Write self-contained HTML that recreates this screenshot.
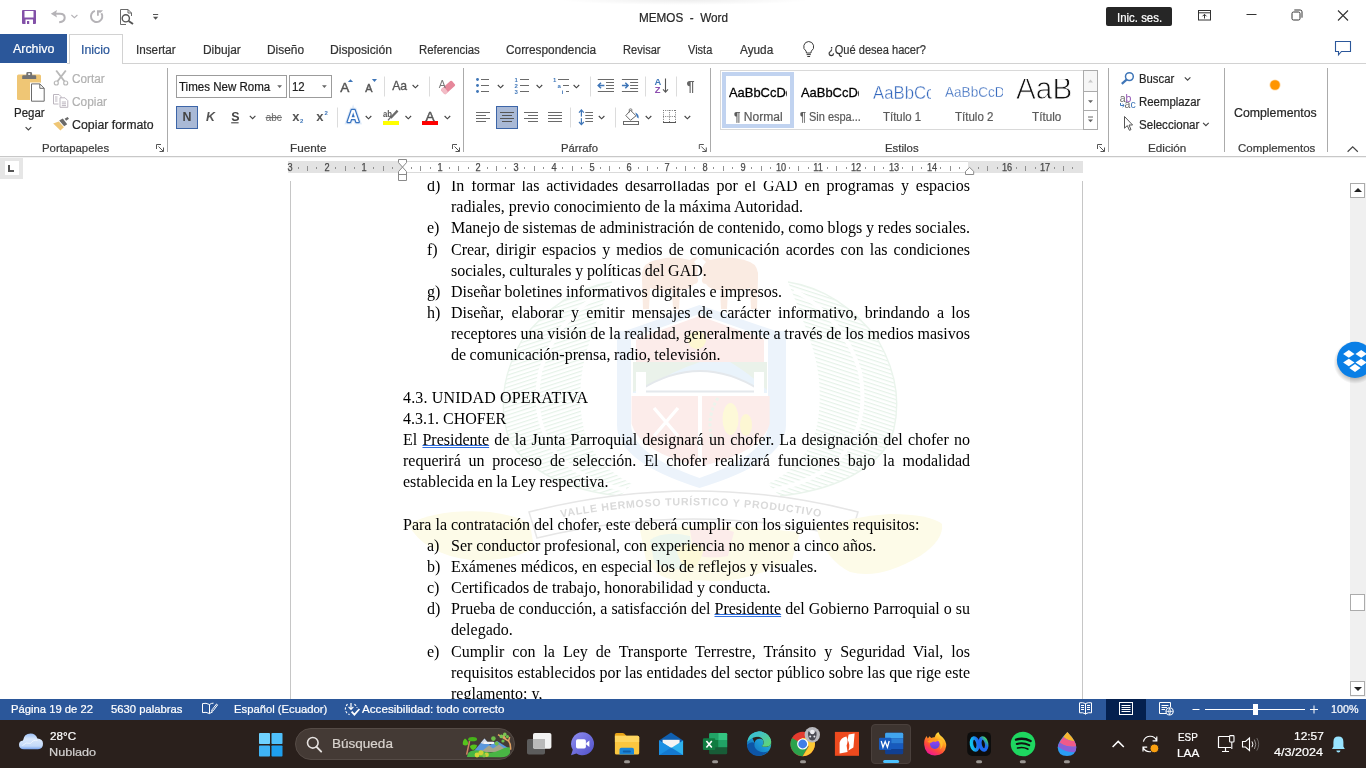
<!DOCTYPE html>
<html lang="es">
<head>
<meta charset="utf-8">
<title>MEMOS - Word</title>
<style>
*{box-sizing:border-box;margin:0;padding:0}
html,body{width:1366px;height:768px;overflow:hidden;background:#fff}
body{will-change:transform;font-family:"Liberation Sans",sans-serif;font-size:12px;color:#262626;position:relative}
svg{font-family:"Liberation Sans",sans-serif}
.abs{position:absolute}
.t{-webkit-text-stroke:.22px;position:absolute;white-space:nowrap;transform-origin:0 50%;line-height:16px;height:16px}
#top{position:absolute;left:0;top:0;width:1366px;height:158px;background:#fff}
#archivo{position:absolute;left:0;top:34px;width:67px;height:29px;background:#2b579a}
#inicio{position:absolute;left:69px;top:34px;width:54px;height:30px;background:#fff;border:1px solid #d2d2d2;border-bottom:none}
#tabline{position:absolute;left:67px;top:63px;width:1299px;height:1px;background:#d2d2d2}
#ribline{position:absolute;left:0;top:156px;width:1366px;height:2px;background:linear-gradient(#c8c8c8 0 50%,#f2f2f2 50% 100%)}
#signin{position:absolute;left:1106px;top:7px;width:66px;height:19px;background:#262626;border-radius:2px}
.box{position:absolute;background:#fff;border:1px solid #9c9c9c}
#ruler{z-index:1;position:absolute;left:0;top:158px;width:1366px;height:22px;background:#fff}
#doc{position:absolute;left:0;top:181px;width:1366px;height:518px;background:#fff;overflow:hidden}
#status{position:absolute;left:0;top:699px;width:1366px;height:21px;background:#2b579a;color:#fff}
#taskbar{position:absolute;left:0;top:720px;width:1366px;height:48px;background:#2a201c;color:#fff}
.pgl{position:absolute;top:0px;width:1px;height:520px;background:#c6c6c6}
#txt{position:absolute;left:403px;top:-5.9px;width:567px;font-family:"Liberation Serif",serif;font-size:16px;line-height:21.17px;color:#000}
.ln{height:21.17px;white-space:nowrap;position:relative}
.ln.li{padding-left:48px}
.ln.j{text-align:justify;text-align-last:justify;white-space:normal}
.lb{position:absolute;left:24px;top:0}
.gr{text-decoration:underline double #2f6fe0;text-decoration-thickness:1px;text-underline-offset:0px;text-decoration-skip-ink:none}
#vsb{position:absolute;left:1350px;top:2px;width:16px;height:514px;background:#f0f0f0}
.sbb{position:absolute;left:0;width:15px;height:15px;background:#fff;border:1px solid #ababab}
.sbb i{position:absolute;left:3px;width:0;height:0;border-left:4px solid transparent;border-right:4px solid transparent}
.sbb i.up{top:4px;border-bottom:4px solid #222}
.sbb i.dn{top:5px;border-top:4px solid #222}
.thumb{position:absolute;left:0px;top:411px;width:15px;height:17px;background:#fff;border:1px solid #ababab}
.rn{position:absolute;top:3.7px;width:20px;margin-left:-10px;text-align:center;font-size:10px;line-height:11px;color:#4a4a4a;-webkit-text-stroke:.25px;transform:scaleX(.92)}
.gal{position:absolute;overflow:hidden;white-space:nowrap}
.gal span{position:absolute;left:0;transform-origin:0 50%;line-height:1}
#tshadow{position:absolute;left:560px;top:0;width:250px;height:5px;background:radial-gradient(ellipse 50% 100% at 50% 0,rgba(0,0,0,.07),rgba(0,0,0,0))}

</style>
</head>
<body>
<div id="top">
<div id="tshadow"></div><div id="tabline"></div><div id="archivo"></div><div id="inicio"></div>
<div id="signin"></div>
<div class="box" style="left:176px;top:75px;width:111px;height:23px"></div>
<div class="box" style="left:289px;top:75px;width:43px;height:23px"></div>
<div class="abs" style="left:720px;top:70px;width:364px;height:60px;border:1px solid #d9d9d9;background:#fff"></div>
<div class="abs" style="left:722px;top:72px;width:72px;height:56px;border:4px solid #c1d3f0;background:#fff"></div>
<div class="gal" style="left:728.5px;top:82px;width:58.8px;height:20px"><span style="top:3.6px;font-size:13.2px;color:#000;-webkit-text-stroke:.3px;transform:scaleX(.98)">AaBbCcDd</span></div>
<div class="gal" style="left:800.6px;top:82px;width:58.6px;height:20px"><span style="top:3.6px;font-size:13.2px;color:#000;-webkit-text-stroke:.3px;transform:scaleX(.98)">AaBbCcDd</span></div>
<div class="gal" style="left:873px;top:78px;width:58px;height:26px"><span style="top:6.2px;font-size:18px;color:#3468bd;-webkit-text-stroke:.4px #fff;transform:scaleX(.93)">AaBbCcD</span></div>
<div class="gal" style="left:945px;top:80px;width:58px;height:22px"><span style="top:4.8px;font-size:14.6px;color:#3468bd;-webkit-text-stroke:.3px #fff;transform:scaleX(.93)">AaBbCcDd</span></div>
<div class="gal" style="left:1014px;top:79px;width:62px;height:26px"><span style="left:2px;top:-6.8px;font-size:32px;color:#111;-webkit-text-stroke:.9px #fff;transform:scaleX(.93)">AaB</span></div>

<div id="ribline"></div>
<svg class="abs" style="left:0;top:0" width="1366" height="158" viewBox="0 0 1366 158" fill="none">
<!-- quick access -->
<rect x="22" y="10" width="14" height="14" rx="1" fill="#8351a8"/>
<rect x="24.5" y="11" width="9" height="6.5" fill="#fff"/>
<rect x="25.5" y="19.5" width="7.5" height="4.5" fill="#fff"/>
<rect x="27" y="21" width="2.2" height="3" fill="#8351a8"/>
<path d="M50.8 13.8 L57 10 L55.9 13.8 L57 17.6 Z" fill="#b5b3b7"/>
<path d="M55 13.8 H60 Q64.7 13.8 64.7 17.8 Q64.7 21.7 59.2 22.3" stroke="#b5b3b7" stroke-width="2"/>
<path d="M71.4 15 L74.4 17.7 L77.4 15" stroke="#b5b3b7" stroke-width="1.1"/>
<path d="M94.9 10.9 A5.7 5.7 0 1 0 101.4 13.2" stroke="#b5b3b7" stroke-width="2"/>
<path d="M97 10.2 H103 L100.6 12.8 L98.8 12.4 V15.8 H97 Z" fill="#b5b3b7"/>
<path d="M120.5 9.5 H128 L131.5 13 V16 M120.5 9.5 V24.5 H126 M128 9.5 V13 H131.5" stroke="#6a6a6a" stroke-width="1"/>
<circle cx="125.8" cy="18.3" r="3.6" stroke="#555" stroke-width="1.4" fill="#fff"/>
<path d="M128.6 21 L133 24" stroke="#555" stroke-width="2"/>
<path d="M153 14.5 H158.2" stroke="#555" stroke-width="1"/>
<path d="M153 16.8 H158.2 L155.6 19.8 Z" fill="#555"/>
<!-- window buttons -->
<rect x="1198.5" y="10.5" width="12" height="9.5" stroke="#333" stroke-width="1"/>
<path d="M1198.5 12.8 H1210.5 M1204.5 18.5 V14.5 M1202.5 16.3 L1204.5 14.3 L1206.5 16.3" stroke="#333" stroke-width="1"/>
<path d="M1246.5 14.5 H1256.5" stroke="#333" stroke-width="1"/>
<rect x="1292" y="12" width="8" height="8" rx="1.5" stroke="#333" stroke-width="1"/>
<path d="M1294.3 10 H1300.2 Q1302 10 1302 11.8 V17.7" stroke="#333" stroke-width="1"/>
<path d="M1338 10.5 L1348 20.5 M1348 10.5 L1338 20.5" stroke="#333" stroke-width="1.1"/>
<!-- tab row icons -->
<path d="M808.7 41.5 A5.2 5.2 0 0 0 806 51 Q806.4 51.8 806.4 53 H811 Q811 51.8 811.4 51 A5.2 5.2 0 0 0 808.7 41.5 Z" stroke="#3b3b3b" stroke-width="1"/>
<path d="M806.6 54.6 H810.8 M807.3 56.5 H810.1" stroke="#3b3b3b" stroke-width="1"/>
<path d="M1335.5 41.5 H1350.5 V51.5 H1341.5 L1338.5 54.8 V51.5 H1335.5 Z" stroke="#2b579a" stroke-width="1.1"/>
<path d="M25.6 127.2 l2.8 2.8 l2.8 -2.8" stroke="#444" stroke-width="1.15"/>
<path d="M249.8 115.9 l2.8 2.8 l2.8 -2.8" stroke="#444" stroke-width="1.15"/>
<path d="M412.6 85 l2.8 2.8 l2.8 -2.8" stroke="#444" stroke-width="1.15"/>
<path d="M365.7 116 l2.8 2.8 l2.8 -2.8" stroke="#444" stroke-width="1.15"/>
<path d="M405.5 116 l2.8 2.8 l2.8 -2.8" stroke="#444" stroke-width="1.15"/>
<path d="M444.6 116 l2.8 2.8 l2.8 -2.8" stroke="#444" stroke-width="1.15"/>
<path d="M497.8 85 l2.8 2.8 l2.8 -2.8" stroke="#444" stroke-width="1.15"/>
<path d="M536.6 85 l2.8 2.8 l2.8 -2.8" stroke="#444" stroke-width="1.15"/>
<path d="M573.6 85 l2.8 2.8 l2.8 -2.8" stroke="#444" stroke-width="1.15"/>
<path d="M598.8 116 l2.8 2.8 l2.8 -2.8" stroke="#444" stroke-width="1.15"/>
<path d="M645.7 116 l2.8 2.8 l2.8 -2.8" stroke="#444" stroke-width="1.15"/>
<path d="M684.6 116 l2.8 2.8 l2.8 -2.8" stroke="#444" stroke-width="1.15"/>
<path d="M1184.8 77.3 l2.8 2.8 l2.8 -2.8" stroke="#444" stroke-width="1.15"/>
<path d="M1203.1 122.9 l2.8 2.8 l2.8 -2.8" stroke="#444" stroke-width="1.15"/>
<path d="M156.5 149 V144.5 H161 M158.5 146.5 L163.3 151.3 M163.5 147.5 V151.5 H159.5" stroke="#555" stroke-width="1"/>
<path d="M452.5 149 V144.5 H457 M454.5 146.5 L459.3 151.3 M459.5 147.5 V151.5 H455.5" stroke="#555" stroke-width="1"/>
<path d="M699.3 149 V144.5 H703.8 M701.3 146.5 L706.0999999999999 151.3 M706.3 147.5 V151.5 H702.3" stroke="#555" stroke-width="1"/>
<path d="M1097.5 149 V144.5 H1102 M1099.5 146.5 L1104.3 151.3 M1104.5 147.5 V151.5 H1100.5" stroke="#555" stroke-width="1"/>
<path d="M167.5 68 V152" stroke="#ababab" stroke-width="1"/>
<path d="M463.5 68 V152" stroke="#ababab" stroke-width="1"/>
<path d="M710.5 68 V152" stroke="#ababab" stroke-width="1"/>
<path d="M1108.5 68 V152" stroke="#ababab" stroke-width="1"/>
<path d="M1224.5 68 V152" stroke="#ababab" stroke-width="1"/>
<path d="M1327.5 68 V152" stroke="#ababab" stroke-width="1"/>
<path d="M384.5 76.5 V96.5" stroke="#dcdcdc" stroke-width="1"/>
<path d="M429.5 76.5 V96.5" stroke="#dcdcdc" stroke-width="1"/>
<path d="M590.5 76.5 V96.5" stroke="#dcdcdc" stroke-width="1"/>
<path d="M645.5 76.5 V96.5" stroke="#dcdcdc" stroke-width="1"/>
<path d="M676.5 76.5 V96.5" stroke="#dcdcdc" stroke-width="1"/>
<path d="M337.5 107.5 V127.5" stroke="#dcdcdc" stroke-width="1"/>
<path d="M570.5 107.5 V127.5" stroke="#dcdcdc" stroke-width="1"/>
<path d="M615.5 107.5 V127.5" stroke="#dcdcdc" stroke-width="1"/>
<rect x="17" y="74.5" width="24" height="25.6" rx="1.5" fill="#efc675"/>
<path d="M22.2 79 V76.3 Q22.2 75.2 23.3 75.2 H26.3 V73.4 Q26.3 72 27.7 72 H30.7 Q32.1 72 32.1 73.4 V75.2 H35.1 Q36.2 75.2 36.2 76.3 V79 Z" fill="#737373"/>
<rect x="28.2" y="73.3" width="2" height="1.6" fill="#fff"/>
<path d="M30 82.4 H40.4 L45.6 87.6 V102.6 H30 Z" fill="#fff"/>
<path d="M31.5 83.9 H39.8 L44.2 88.3 V101.2 H31.5 Z M39.8 83.9 V88.3 H44.2" stroke="#6a6a6a" stroke-width="1" fill="#fff"/>
<path d="M56.2 70.5 L64.6 81.5 M65.8 70.5 L57.4 81.5" stroke="#b9b9b9" stroke-width="1.9"/>
<circle cx="56.3" cy="83" r="2" stroke="#b9b9b9" stroke-width="1.2"/><circle cx="65.7" cy="83" r="2" stroke="#b9b9b9" stroke-width="1.2"/>
<path d="M53.5 94.5 H59 L61 96.5 V98 M53.5 94.5 V104 H58.5 M55 97 H57.5 M55 99 H57.5 M55 101 H57.5" stroke="#bcb6bf" stroke-width="1"/>
<path d="M60 97.8 H65 L67.8 100.6 V107.3 H60 Z M61.8 102 H66 M61.8 103.8 H66 M61.8 105.6 H66" stroke="#bcb6bf" stroke-width="1"/>
<path d="M53.2 123.4 L58.8 121.6 L63.9 127.2 L60.4 130.6 Z" fill="#efc675"/>
<path d="M59.2 120.6 L62.8 118.6 L67.2 124.2 L64.2 126.2 Z" fill="#6a6a6a"/>
<path d="M64.6 118.8 L67.6 116.9 L69 118.8 L66.1 120.8 Z" fill="#6a6a6a"/>
<path d="M277.2 85.2 H282 L279.6 88 Z" fill="#666"/><path d="M322 85.2 H326.8 L324.4 88 Z" fill="#666"/>
<path d="M347.9 82 H353.1 L350.5 79.2 Z" fill="#3f76b8"/><path d="M371.9 79 H377 L374.45 81.9 Z" fill="#3f76b8"/>
<g transform="rotate(-42 448 87.4)"><rect x="440.8" y="84.2" width="14.4" height="6.6" rx="1.2" fill="#e6879a"/><rect x="440.8" y="84.2" width="4.4" height="6.6" rx="1.2" fill="#f2bcc6"/></g>
<path d="M397.6 110.6 L390.6 118" stroke="#6a6a6a" stroke-width="2.3"/><path d="M390.8 117 L388 120.4" stroke="#6a6a6a" stroke-width="1.2"/>
<rect x="383" y="121" width="16" height="4" fill="#ffff00"/>
<rect x="422" y="121" width="16" height="4" fill="#ff0000"/>
<circle cx="477.5" cy="79.5" r="1.45" fill="#3f76b8"/><path d="M481 79.5 H489" stroke="#6a6a6a"/>
<path d="M520 79.5 H529" stroke="#6a6a6a"/>
<circle cx="477.5" cy="85.5" r="1.45" fill="#3f76b8"/><path d="M481 85.5 H489" stroke="#6a6a6a"/>
<path d="M520 85.5 H529" stroke="#6a6a6a"/>
<circle cx="477.5" cy="91.5" r="1.45" fill="#3f76b8"/><path d="M481 91.5 H489" stroke="#6a6a6a"/>
<path d="M520 91.5 H529" stroke="#6a6a6a"/>
<path d="M558 79.5 H569 M563 85.5 H569 M566 91.5 H569" stroke="#6a6a6a"/>
<path d="M597.8 79.5 H614.0 M597.8 91.5 H614.0 M606.0 82.5 H614.0 M606.0 85.5 H614.0 M606.0 88.5 H614.0" stroke="#6a6a6a"/>
<path d="M598.4 85.5 H604.4 M601.0 82.8 L598.1999999999999 85.5 L601.0 88.2" stroke="#3f76b8" stroke-width="1.5"/>
<path d="M621.9 79.5 H638.1 M621.9 91.5 H638.1 M630.1 82.5 H638.1 M630.1 85.5 H638.1 M630.1 88.5 H638.1" stroke="#6a6a6a"/>
<path d="M621.9 85.5 H627.9 M625.3 82.8 L628.1 85.5 L625.3 88.2" stroke="#3f76b8" stroke-width="1.5"/>
<path d="M665.5 78.5 V92 M663 89.4 L665.5 92.2 L668 89.4" stroke="#555" stroke-width="1.1"/>
<path d="M476 112.5 H490" stroke="#6a6a6a"/>
<path d="M476 115.5 H486" stroke="#6a6a6a"/>
<path d="M476 118.5 H490" stroke="#6a6a6a"/>
<path d="M476 121.5 H486" stroke="#6a6a6a"/>
<rect x="496.5" y="106.5" width="21" height="22" fill="#a9b9d6" stroke="#3c65a8"/>
<path d="M500 112.5 H514" stroke="#555"/>
<path d="M502 115.5 H512" stroke="#555"/>
<path d="M500 118.5 H514" stroke="#555"/>
<path d="M502 121.5 H512" stroke="#555"/>
<path d="M524 112.5 H538" stroke="#6a6a6a"/>
<path d="M528 115.5 H538" stroke="#6a6a6a"/>
<path d="M524 118.5 H538" stroke="#6a6a6a"/>
<path d="M528 121.5 H538" stroke="#6a6a6a"/>
<path d="M548 112.5 H562" stroke="#6a6a6a"/>
<path d="M548 115.5 H562" stroke="#6a6a6a"/>
<path d="M548 118.5 H562" stroke="#6a6a6a"/>
<path d="M548 121.5 H562" stroke="#6a6a6a"/>
<path d="M585.3 112.5 H593.0" stroke="#6a6a6a"/>
<path d="M585.3 115.5 H593.0" stroke="#6a6a6a"/>
<path d="M585.3 118.5 H593.0" stroke="#6a6a6a"/>
<path d="M585.3 121.5 H593.0" stroke="#6a6a6a"/>
<path d="M581.4 110 V124.6 M579 112.6 L581.4 109.9 L583.8 112.6 M579 122 L581.4 124.7 L583.8 122" stroke="#3f76b8" stroke-width="1.2"/>
<rect x="579" y="116.6" width="5" height="1.6" fill="#fff"/>
<rect x="623.5" y="121.5" width="15" height="3" fill="#fff" stroke="#6a6a6a"/>
<path d="M630.5 110.3 L636 115.8 L630.5 120.3 L625.8 115.6 Z" stroke="#6a6a6a" fill="#fff"/>
<path d="M629.3 112.5 V109.6 Q629.3 108.9 630.2 108.9 H631 Q631.8 108.9 631.8 109.6 V111.4" stroke="#6a6a6a" stroke-width=".9"/>
<path d="M635.2 112.6 Q639.2 114 638.6 118.4 Q636.4 117.4 636.4 115.4 Z" fill="#3f76b8"/>
<path d="M663.5 110 V122 M669.5 110 V122 M675.5 110 V122 M663 110.5 H676 M663 116.5 H676" stroke="#777" stroke-dasharray="1 1.2"/>
<path d="M663 122.5 H676" stroke="#555"/>
<rect x="176.5" y="106.5" width="21" height="22" fill="#a9b9d6" stroke="#3c65a8"/>
<path d="M231.2 122.8 H238.6" stroke="#444" stroke-width="1.1"/>
<path d="M265.6 117.6 H282" stroke="#666" stroke-width="1"/>
<rect x="1083.5" y="70.5" width="14" height="21" fill="#f6f6f6" stroke="#ababab"/><rect x="1083.5" y="91.5" width="14" height="19" fill="#fff" stroke="#ababab"/><rect x="1083.5" y="110.5" width="14" height="19" fill="#fff" stroke="#ababab"/>
<path d="M1088 82.4 H1093 L1090.5 79.6 Z" fill="#c8c8c8"/><path d="M1088 100.2 H1093 L1090.5 103 Z" fill="#666"/><path d="M1088 117 H1093" stroke="#666"/><path d="M1088 119.4 H1093 L1090.5 122.2 Z" fill="#666"/>
<circle cx="1129.4" cy="76.6" r="3.9" stroke="#3f76b8" stroke-width="1.5"/><path d="M1126.6 79.6 L1121.8 83.8" stroke="#3f76b8" stroke-width="2.2"/>
<path d="M1120.5 103 V105.5 H1124 M1122.6 104 L1124.2 105.5 L1122.6 107" stroke="#3f76b8" stroke-width="1"/>
<path d="M1124.5 116.5 V128.2 L1127.3 125.6 L1129.4 130.3 L1131 129.6 L1129 125 H1132.6 Z" stroke="#555" stroke-width="1" fill="#fff"/>
<circle cx="1275" cy="85" r="5.6" fill="#ffb040" opacity=".45"/><circle cx="1275" cy="85" r="4.8" fill="#ff9500"/>
<path d="M1347.6 151.8 L1352.7 146.9 L1357.8 151.8" stroke="#444" stroke-width="1.2"/>
<text x="340.2" y="92" font-size="13.6" fill="#555" stroke="#555" stroke-width=".45">A</text>
<text x="365.2" y="92" font-size="10.8" fill="#555" stroke="#555" stroke-width=".45">A</text>
<text x="392.2" y="89.8" font-size="12.2" fill="#555" stroke="#555" stroke-width=".3">Aa</text>
<text x="438.8" y="87.6" font-size="10.5" fill="#777" >A</text>
<text x="347.2" y="122.4" font-size="16.5" font-weight="bold" fill="#cfe0f5" stroke="#cfe0f5" stroke-width="4.4" opacity=".7">A</text>
<text x="347.2" y="122.4" font-size="16.5" font-weight="bold" fill="#fff" stroke="#3672c0" stroke-width="2.4" paint-order="stroke" stroke-linejoin="round">A</text>
<text x="383" y="117.2" font-size="9.5" fill="#555" font-weight="bold" textLength="9" lengthAdjust="spacingAndGlyphs">ab</text>
<text x="425.6" y="120.8" font-size="13.6" fill="#555" stroke="#555" stroke-width=".45">A</text>
<text x="182.5" y="120.6" font-size="12.4" fill="#444" font-weight="bold">N</text>
<text x="206" y="120.6" font-size="12.4" fill="#555" font-weight="bold" font-style="italic">K</text>
<text x="231.2" y="120.6" font-size="12.4" fill="#444" font-weight="bold">S</text>
<text x="265.8" y="121" font-size="10.5" fill="#666" textLength="16" lengthAdjust="spacingAndGlyphs">abc</text>
<text x="292.2" y="120.6" font-size="13" fill="#555" font-weight="bold">x</text>
<text x="300" y="123.4" font-size="6" fill="#3f76b8" font-weight="bold">2</text>
<text x="316.2" y="120.6" font-size="13" fill="#555" font-weight="bold">x</text>
<text x="324.4" y="115.4" font-size="6" fill="#3f76b8" font-weight="bold">2</text>
<text x="514.6" y="81.6" font-size="6" fill="#3f76b8" font-weight="bold">1</text>
<text x="514.6" y="87.6" font-size="6" fill="#3f76b8" font-weight="bold">2</text>
<text x="514.6" y="93.6" font-size="6" fill="#3f76b8" font-weight="bold">3</text>
<text x="553" y="81.6" font-size="6" fill="#3f76b8" font-weight="bold">1</text>
<text x="557.4" y="87.6" font-size="6" fill="#3f76b8" font-weight="bold">a</text>
<text x="561.8" y="93.6" font-size="6" fill="#3f76b8" font-weight="bold">i</text>
<text x="654.6" y="85.2" font-size="9.4" fill="#3f76b8" font-weight="bold">A</text>
<text x="654.8" y="92.8" font-size="9.4" fill="#8e4fb0" font-weight="bold">Z</text>
<text x="686.4" y="91" font-size="14.5" fill="#666" font-weight="bold">¶</text>
<text x="1119.8" y="101.6" font-size="10.5" fill="#666" >a</text>
<text x="1125.4" y="101.6" font-size="10.5" fill="#8e4fb0" >b</text>
<text x="1124.6" y="108" font-size="10.5" fill="#666" >a</text>
<text x="1130.4" y="108" font-size="10.5" fill="#3f76b8" >c</text>
</svg>

</div>
<div id="ruler"><div class="abs" style="left:0;top:0;width:23px;height:21px;background:#e6e6e6"></div>
<div class="abs" style="left:5px;top:3px;width:14px;height:14px;background:#fff"></div>
<svg class="abs" style="left:0;top:0" width="1366" height="24" viewBox="0 158 1366 24" fill="none" shape-rendering="crispEdges">
<path d="M9 165 V171 H14" stroke="#555" stroke-width="2"/>
<rect x="288" y="161" width="114" height="12" fill="#e3e3e3"/>
<rect x="968" y="161" width="115" height="12" fill="#e3e3e3"/>
<rect x="402" y="161" width="566" height="1" fill="#dadada"/><rect x="402" y="172" width="566" height="1" fill="#dadada"/>
<rect x="298" y="167" width="1" height="2" fill="#909090"/>
<rect x="307" y="166" width="1" height="5" fill="#909090"/>
<rect x="316" y="167" width="1" height="2" fill="#909090"/>
<rect x="335" y="167" width="1" height="2" fill="#909090"/>
<rect x="345" y="166" width="1" height="5" fill="#909090"/>
<rect x="354" y="167" width="1" height="2" fill="#909090"/>
<rect x="373" y="167" width="1" height="2" fill="#909090"/>
<rect x="383" y="166" width="1" height="5" fill="#909090"/>
<rect x="392" y="167" width="1" height="2" fill="#909090"/>
<rect x="411" y="167" width="1" height="2" fill="#909090"/>
<rect x="420" y="166" width="1" height="5" fill="#909090"/>
<rect x="430" y="167" width="1" height="2" fill="#909090"/>
<rect x="449" y="167" width="1" height="2" fill="#909090"/>
<rect x="458" y="166" width="1" height="5" fill="#909090"/>
<rect x="468" y="167" width="1" height="2" fill="#909090"/>
<rect x="487" y="167" width="1" height="2" fill="#909090"/>
<rect x="496" y="166" width="1" height="5" fill="#909090"/>
<rect x="505" y="167" width="1" height="2" fill="#909090"/>
<rect x="524" y="167" width="1" height="2" fill="#909090"/>
<rect x="534" y="166" width="1" height="5" fill="#909090"/>
<rect x="543" y="167" width="1" height="2" fill="#909090"/>
<rect x="562" y="167" width="1" height="2" fill="#909090"/>
<rect x="572" y="166" width="1" height="5" fill="#909090"/>
<rect x="581" y="167" width="1" height="2" fill="#909090"/>
<rect x="600" y="167" width="1" height="2" fill="#909090"/>
<rect x="609" y="166" width="1" height="5" fill="#909090"/>
<rect x="619" y="167" width="1" height="2" fill="#909090"/>
<rect x="638" y="167" width="1" height="2" fill="#909090"/>
<rect x="647" y="166" width="1" height="5" fill="#909090"/>
<rect x="657" y="167" width="1" height="2" fill="#909090"/>
<rect x="676" y="167" width="1" height="2" fill="#909090"/>
<rect x="685" y="166" width="1" height="5" fill="#909090"/>
<rect x="694" y="167" width="1" height="2" fill="#909090"/>
<rect x="713" y="167" width="1" height="2" fill="#909090"/>
<rect x="723" y="166" width="1" height="5" fill="#909090"/>
<rect x="732" y="167" width="1" height="2" fill="#909090"/>
<rect x="751" y="167" width="1" height="2" fill="#909090"/>
<rect x="761" y="166" width="1" height="5" fill="#909090"/>
<rect x="770" y="167" width="1" height="2" fill="#909090"/>
<rect x="789" y="167" width="1" height="2" fill="#909090"/>
<rect x="798" y="166" width="1" height="5" fill="#909090"/>
<rect x="808" y="167" width="1" height="2" fill="#909090"/>
<rect x="827" y="167" width="1" height="2" fill="#909090"/>
<rect x="836" y="166" width="1" height="5" fill="#909090"/>
<rect x="846" y="167" width="1" height="2" fill="#909090"/>
<rect x="865" y="167" width="1" height="2" fill="#909090"/>
<rect x="874" y="166" width="1" height="5" fill="#909090"/>
<rect x="883" y="167" width="1" height="2" fill="#909090"/>
<rect x="902" y="167" width="1" height="2" fill="#909090"/>
<rect x="912" y="166" width="1" height="5" fill="#909090"/>
<rect x="921" y="167" width="1" height="2" fill="#909090"/>
<rect x="940" y="167" width="1" height="2" fill="#909090"/>
<rect x="950" y="166" width="1" height="5" fill="#909090"/>
<rect x="959" y="167" width="1" height="2" fill="#909090"/>
<rect x="978" y="167" width="1" height="2" fill="#909090"/>
<rect x="987" y="166" width="1" height="5" fill="#909090"/>
<rect x="997" y="167" width="1" height="2" fill="#909090"/>
<rect x="1016" y="167" width="1" height="2" fill="#909090"/>
<rect x="1025" y="166" width="1" height="5" fill="#909090"/>
<rect x="1035" y="167" width="1" height="2" fill="#909090"/>
<rect x="1054" y="167" width="1" height="2" fill="#909090"/>
<rect x="1063" y="166" width="1" height="5" fill="#909090"/>
<rect x="1072" y="167" width="1" height="2" fill="#909090"/>
</svg>
<svg class="abs" style="left:0;top:0" width="1366" height="24" viewBox="0 158 1366 24" fill="none">
<path d="M398.5 159.5 H406.5 V162.6 L398.5 171.6 V180.5 H406.5 V171.6 L398.5 162.6 Z" fill="#fff" stroke="#8a8a8a"/><path d="M398.5 174.5 H406.5" stroke="#8a8a8a"/>
<path d="M965.5 174.5 V171.4 L969.6 167.4 L973.7 171.4 V174.5 Z" fill="#fff" stroke="#8a8a8a"/>
</svg>
<span class="rn" style="left:289.6px">3</span>
<span class="rn" style="left:326.8px">2</span>
<span class="rn" style="left:364.4px">1</span>
<span class="rn" style="left:440.4px">1</span>
<span class="rn" style="left:478.2px">2</span>
<span class="rn" style="left:516.0px">3</span>
<span class="rn" style="left:553.8px">4</span>
<span class="rn" style="left:591.6px">5</span>
<span class="rn" style="left:629.4px">6</span>
<span class="rn" style="left:667.2px">7</span>
<span class="rn" style="left:705.0px">8</span>
<span class="rn" style="left:742.8px">9</span>
<span class="rn" style="left:780.6px">10</span>
<span class="rn" style="left:818.4px">11</span>
<span class="rn" style="left:856.2px">12</span>
<span class="rn" style="left:894.0px">13</span>
<span class="rn" style="left:931.8px">14</span>
<span class="rn" style="left:1007.4px">16</span>
<span class="rn" style="left:1045.2px">17</span></div>
<div id="doc"><div class="pgl" style="left:290px"></div><div class="pgl" style="left:1082px"></div>
<svg class="abs" style="left:400px;top:59px" width="560" height="360" viewBox="400 240 560 360" fill="none">
<defs>
<pattern id="hl" width="3.8" height="3.8" patternUnits="userSpaceOnUse" patternTransform="rotate(-18)"><rect width="3.8" height="1.2" fill="#e5f2e8"/></pattern>
<pattern id="hr" width="3.8" height="3.8" patternUnits="userSpaceOnUse" patternTransform="rotate(18)"><rect width="3.8" height="1.2" fill="#e5f2e8"/></pattern>
</defs>
<!-- wreath -->
<path d="M612 282 Q560 290 522 340 Q492 392 510 442 Q540 487 620 496 L632 484 Q588 462 582 420 Q576 380 590 340 Q600 310 612 282 Z" fill="url(#hl)"/>
<path d="M788 282 Q840 290 878 340 Q908 392 890 442 Q860 487 780 496 L768 484 Q812 462 818 420 Q824 380 810 340 Q800 310 788 282 Z" fill="url(#hr)"/>
<path d="M612 282 Q560 290 522 340 Q492 392 510 442 Q540 487 620 496" stroke="#eaf4ec" stroke-width="1.4"/>
<path d="M788 282 Q840 290 878 340 Q908 392 890 442 Q860 487 780 496" stroke="#eaf4ec" stroke-width="1.4"/>
<path d="M606 290 Q556 318 540 372 Q530 424 560 458 Q586 482 626 490" stroke="#fff" stroke-width="4"/>
<path d="M794 290 Q844 318 860 372 Q870 424 840 458 Q814 482 774 490" stroke="#fff" stroke-width="4"/>
<!-- bulls -->
<g fill="#faebe2">
<path d="M697 276 Q700 268 694 262 L698 258 Q694 256 690 260 Q670 254 650 262 Q641 266 642 278 L643 309 H649 L650 288 Q660 292 672 290 L673 309 H679 L680 290 Q690 290 694 284 Q700 284 697 276 Z"/>
<path d="M703 276 Q700 268 706 262 L702 258 Q706 256 710 260 Q730 254 750 262 Q759 266 758 278 L757 309 H751 L750 288 Q740 292 728 290 L727 309 H721 L720 290 Q710 290 706 284 Q700 284 703 276 Z"/>
</g>
<!-- shield -->
<path d="M699.5 305 L776 331 H786 V425 Q786 462 699.5 488 Q617 462 617 425 V331 H625 Z" fill="#ecf3fb"/>
<path d="M699.5 314 L768 338 V424 Q768 454 699.5 478 Q631 454 631 424 V338 Z" fill="#fff"/>
<path d="M699.5 316 L764 339 V362 H636 V339 Z" fill="#fcecea"/>
<circle cx="697" cy="340" r="9" fill="#fdf7d2"/>
<rect x="633" y="362" width="134" height="31" fill="#e9f3fb"/><path d="M633 362 H700 Q670 372 650 386 L633 392 Z" fill="#eaf2ea"/><path d="M767 362 H730 Q750 374 767 390 Z" fill="#eaf2ea"/>
<path d="M640 390 Q700 352 760 390 V393 H640 Z" fill="#fff"/>
<path d="M640 390 Q700 352 760 390 M640 391.5 H760" stroke="#e4e8ec" stroke-width="2"/>
<path d="M636 372 H646 V393 H636 Z M754 372 H764 V393 H754 Z" fill="#fff"/>
<path d="M631.6 396 H698 V466 Q640 452 631.6 424 Z" fill="#fcecea"/>
<path d="M702 396 H769.6 V424 Q762 452 702 466 Z" fill="#fcecea"/>
<path d="M654 408 L678 436 M678 408 L654 436" stroke="#fff" stroke-width="3.4"/>
<ellipse cx="730.5" cy="419" rx="8" ry="16" fill="#fdf9d8"/><ellipse cx="746" cy="425" rx="6" ry="11" fill="#fdf7d3"/>
<path d="M718 398 Q706 416 712 440" stroke="#ebf4ec" stroke-width="3" stroke-dasharray="3 2.4"/>
<!-- ribbon -->
<path d="M529 512 Q694 470 858 512 L850 538 Q694 500 537 538 Z" fill="#fff" stroke="#e6e6e6" stroke-width="1.5"/>
<path id="wmarc" d="M561 517.5 Q691 493 823 517.5"/>
<text font-size="10.6" fill="#dadada" font-weight="bold"><textPath href="#wmarc" textLength="261">VALLE HERMOSO TURÍSTICO Y PRODUCTIVO</textPath></text>
<!-- flags -->
<path d="M408 524 Q440 508 490 512 Q520 516 530 524 L534 548 Q510 562 470 560 Q424 554 408 524 Z" fill="#fdfbe8"/>
<path d="M817 530 Q850 516 890 514 Q930 514 942 524 Q944 540 920 556 Q880 580 850 572 Q826 560 817 530 Z" fill="#fdfbe8"/>
<path d="M640 530 Q700 522 800 532 L792 560 Q740 586 700 580 Q660 586 646 560 Z" fill="#fdfbe8"/>
<path d="M650 540 Q664 530 690 536 L694 566 Q670 574 654 562 Z" fill="#ecf6ee"/>
<path d="M690 530 Q714 524 734 532 L728 556 Q708 560 694 554 Z" fill="#fcecea"/>
<path d="M676 548 Q690 540 704 548 Q700 566 690 570 Q680 566 676 548 Z" fill="#fdf9d8"/>
</svg>

<div id="txt">
<div class="ln li j"><span class="lb">d)</span>In formar las actividades desarrolladas por el GAD en programas y espacios</div>
<div class="ln li"><span class="lb"></span>radiales, previo conocimiento de la máxima Autoridad.</div>
<div class="ln li" style="word-spacing:-0.2px"><span class="lb">e)</span>Manejo de sistemas de administración de contenido, como blogs y redes sociales.</div>
<div class="ln li j"><span class="lb">f)</span>Crear, dirigir espacios y medios de comunicación acordes con las condiciones</div>
<div class="ln li" style="word-spacing:-.3px"><span class="lb"></span>sociales, culturales y políticas del GAD.</div>
<div class="ln li" style="word-spacing:-.28px"><span class="lb">g)</span>Diseñar boletines informativos digitales e impresos.</div>
<div class="ln li j"><span class="lb">h)</span>Diseñar, elaborar y emitir mensajes de carácter informativo, brindando a los</div>
<div class="ln li" style="word-spacing:-0.254px"><span class="lb"></span>receptores una visión de la realidad, generalmente a través de los medios masivos</div>
<div class="ln li" style="word-spacing:-.5px"><span class="lb"></span>de comunicación-prensa, radio, televisión.</div>
<div class="ln">&nbsp;</div>
<div class="ln" style="letter-spacing:.16px">4.3. UNIDAD OPERATIVA</div>
<div class="ln">4.3.1. CHOFER</div>
<div class="ln j">El <span class="gr">Presidente</span> de la Junta Parroquial designará un chofer. La designación del chofer no</div>
<div class="ln j">requerirá un proceso de selección. El chofer realizará funciones bajo la modalidad</div>
<div class="ln" style="word-spacing:-.5px">establecida en la Ley respectiva.</div>
<div class="ln">&nbsp;</div>
<div class="ln">Para la contratación del chofer, este deberá cumplir con los siguientes requisitos:</div>
<div class="ln li" style="word-spacing:-.1px"><span class="lb">a)</span>Ser conductor profesional, con experiencia no menor a cinco años.</div>
<div class="ln li" style="word-spacing:-.09px"><span class="lb">b)</span>Exámenes médicos, en especial los de reflejos y visuales.</div>
<div class="ln li" style="word-spacing:-.16px"><span class="lb">c)</span>Certificados de trabajo, honorabilidad y conducta.</div>
<div class="ln li j"><span class="lb">d)</span>Prueba de conducción, a satisfacción del <span class="gr">Presidente</span> del Gobierno Parroquial o su</div>
<div class="ln li"><span class="lb"></span>delegado.</div>
<div class="ln li j"><span class="lb">e)</span>Cumplir con la Ley de Transporte Terrestre, Tránsito y Seguridad Vial, los</div>
<div class="ln li j"><span class="lb"></span>requisitos establecidos por las entidades del sector público sobre las que rige este</div>
<div class="ln li"><span class="lb"></span>reglamento; y,</div>
</div>
<div id="vsb"><div class="sbb" style="top:0px"><i class="up"></i></div><div class="sbb" style="top:498px"><i class="dn"></i></div><div class="thumb"></div></div>
<svg class="abs" style="left:1326px;top:149px" width="40" height="60" viewBox="1326 330 40 60" fill="none">
<defs><radialGradient id="dbs" cx=".5" cy=".5" r=".5"><stop offset=".72" stop-color="#000" stop-opacity=".25"/><stop offset="1" stop-color="#000" stop-opacity="0"/></radialGradient></defs>
<circle cx="1355" cy="362.4" r="21.5" fill="url(#dbs)"/>
<circle cx="1355" cy="359.9" r="18.1" fill="#0a7fe6"/>
<g fill="#fff"><path d="M1348.8 350 L1354.5 353.9 L1348.8 357.8 L1343.1 353.9 Z"/><path d="M1361.2 350 L1366.9 353.9 L1361.2 357.8 L1355.5 353.9 Z"/><path d="M1348.8 358.7 L1354.5 362.5 L1348.8 366.3 L1343.1 362.5 Z"/><path d="M1361.2 358.7 L1366.9 362.5 L1361.2 366.3 L1355.5 362.5 Z"/><path d="M1355 364 L1360.6 368 L1355 372.1 L1349.3 368 Z"/></g>
</svg>

</div>
<div id="status"><div class="abs" style="left:1106px;top:0;width:40px;height:21px;background:#04204f"></div>
<svg class="abs" style="left:0;top:0" width="1366" height="21" viewBox="0 699 1366 21" fill="none">
<!-- proofing -->
<path d="M209.5 704.5 Q206 702.6 202.5 703.6 V712.6 Q206 711.6 209.5 713.6 Q211 712.4 212.5 712.2 M209.5 704.5 V713.6 M209.5 704.5 Q211.5 703 213.5 703.2" stroke="#fff" stroke-width="1"/>
<path d="M212 709.8 L216.6 704 L217.6 704.9 L213.2 710.8 L211.6 711.4 Z" stroke="#fff" stroke-width="1"/>
<!-- accessibility -->
<path d="M351 703 V709 M348.6 706.8 L351 709.3 L353.4 706.8" stroke="#fff" stroke-width="1.2"/>
<path d="M347.6 704.2 A6 6 0 0 0 349.6 714.6" stroke="#fff" stroke-width="1.1" stroke-dasharray="2.2 1.6"/>
<path d="M354.4 704.2 A6 6 0 0 1 357 708" stroke="#fff" stroke-width="1.1" stroke-dasharray="2.2 1.6"/>
<path d="M351.6 711.6 L354.4 714.6 L359.4 709" stroke="#fff" stroke-width="1.8"/>
<!-- read mode -->
<path d="M1085.5 703.5 Q1082.5 702.2 1079.5 702.8 V712.8 Q1082.5 712.2 1085.5 713.8 Q1088.5 712.2 1091.5 712.8 V702.8 Q1088.5 702.2 1085.5 703.5 Z M1085.5 703.5 V714.5" stroke="#fff" stroke-width="1"/>
<path d="M1081 705.5 H1084 M1081 707.5 H1084 M1081 709.5 H1084 M1087 705.5 H1090 M1087 707.5 H1090 M1087 709.5 H1090" stroke="#fff" stroke-width="1"/>
<!-- print layout -->
<rect x="1119.5" y="702.5" width="13" height="12" stroke="#fff"/>
<path d="M1121.5 705.5 H1130.5 M1121.5 707.5 H1130.5 M1121.5 709.5 H1130.5 M1121.5 711.5 H1130.5" stroke="#fff"/>
<!-- web layout -->
<path d="M1166 713.5 H1159.5 V702.5 H1170.5 V707" stroke="#fff"/>
<path d="M1161.5 705.5 H1168.5 M1161.5 707.5 H1167 M1161.5 709.5 H1165" stroke="#fff"/>
<circle cx="1169.6" cy="711.4" r="3.6" stroke="#fff" stroke-width="1.1" fill="#2b579a"/>
<path d="M1166.4 711.4 H1172.8 M1169.6 708 Q1167.6 711.4 1169.6 714.8 M1169.6 708 Q1171.6 711.4 1169.6 714.8" stroke="#fff" stroke-width=".8"/>
<!-- zoom -->
<path d="M1192.5 709.5 H1199.5 M1205 709.5 H1305 M1310 709.5 H1318 M1314 705.5 V713.5" stroke="#fff" stroke-width="1"/>
<rect x="1253" y="704" width="5" height="11" fill="#fff"/>
</svg>
</div>
<div id="taskbar"><div class="abs" style="left:295px;top:8px;width:220px;height:32px;border-radius:16px;background:#443a35;border:1px solid #554b46"></div>
<div class="abs" style="left:871px;top:4px;width:40px;height:40px;border-radius:4px;background:#3d3430;border:1px solid #4a403c"></div>
<svg class="abs" style="left:0;top:0" width="1366" height="48" viewBox="0 720 1366 48" fill="none">
<defs>
<linearGradient id="gcl" x1="0" y1="0" x2="0" y2="1"><stop offset="0" stop-color="#9cc0f6"/><stop offset=".35" stop-color="#d9e7fb"/><stop offset=".8" stop-color="#c4d9f8"/><stop offset="1" stop-color="#7aa5ee"/></linearGradient>
<linearGradient id="gwin" x1="0" y1="0" x2="1" y2="1"><stop offset="0" stop-color="#7ad8ff"/><stop offset="1" stop-color="#1497ea"/></linearGradient>
<linearGradient id="gchat" x1="0" y1="0" x2="1" y2="1"><stop offset="0" stop-color="#8f8df0"/><stop offset="1" stop-color="#5050c8"/></linearGradient>
<linearGradient id="gedge" x1="0" y1="1" x2="1" y2="0"><stop offset="0" stop-color="#0f5fb4"/><stop offset=".55" stop-color="#1c9ad6"/><stop offset="1" stop-color="#56d67a"/></linearGradient>
<linearGradient id="gff" x1=".85" y1=".05" x2=".3" y2="1"><stop offset="0" stop-color="#fff04a"/><stop offset=".35" stop-color="#ffa21e"/><stop offset=".7" stop-color="#ff4a3a"/><stop offset="1" stop-color="#f0149a"/></linearGradient><linearGradient id="gffp" x1=".5" y1="0" x2=".5" y2="1"><stop offset="0" stop-color="#a23ff5"/><stop offset="1" stop-color="#5548e0"/></linearGradient><linearGradient id="gwx2" x1="0" y1="1" x2="1" y2="0"><stop offset="0" stop-color="#1e6af0"/><stop offset=".6" stop-color="#1e6af0"/><stop offset="1" stop-color="#46dc5a"/></linearGradient><linearGradient id="gwx1" x1="0" y1="0" x2="1" y2="0"><stop offset="0" stop-color="#12c2ea"/><stop offset="1" stop-color="#1e6af0"/></linearGradient>
<linearGradient id="gdrop" x1="0" y1="0" x2="1" y2="1"><stop offset="0" stop-color="#ffb347"/><stop offset=".4" stop-color="#e85aa8"/><stop offset=".7" stop-color="#8a5cf0"/><stop offset="1" stop-color="#2aa8f0"/></linearGradient>
<linearGradient id="gwx" x1="0" y1="0" x2="1" y2="0"><stop offset="0" stop-color="#2a8df0"/><stop offset="1" stop-color="#3ad6a0"/></linearGradient>
<linearGradient id="gedge2" x1="0" y1="0" x2="1" y2="1"><stop offset="0" stop-color="#35b8e8"/><stop offset="1" stop-color="#63d86a"/></linearGradient></defs>
<!-- weather -->
<path d="M24 749.2 Q19 749.2 19 744.8 Q19 741 23 740.6 Q24 733.6 30.6 733.6 Q35.6 733.6 37.4 738.4 Q43 738.6 43 743.8 Q43 749.2 38 749.2 Z" fill="url(#gcl)"/><path d="M22.4 745.6 Q26 741.6 30.6 743.4 Q33 739.6 37.6 740.4" stroke="#fff" stroke-width="1" opacity=".55"/>
<!-- start -->
<rect x="259" y="733" width="11" height="11" rx=".8" fill="#6fd2ff"/><rect x="271.5" y="733" width="11" height="11" rx=".8" fill="#4fc0fb"/>
<rect x="259" y="745.5" width="11" height="11" rx=".8" fill="#3fb4f6"/><rect x="271.5" y="745.5" width="11" height="11" rx=".8" fill="#1e9fee"/>
<!-- search -->
<circle cx="312.8" cy="742.8" r="5.3" stroke="#e6e2e0" stroke-width="1.6"/><path d="M316.6 746.8 L321.2 751.6" stroke="#e6e2e0" stroke-width="1.9" stroke-linecap="round"/>
<!-- landscape -->
<path d="M474 751 L484.5 738.4 L490 745 L497 741 L509.8 749 L509.8 752 H474 Z" fill="#5b97dc"/>
<path d="M480.6 743 L484.5 738.4 L488.4 743.2 L486 742.4 L483.4 744 Z" fill="#d4dae6"/>
<path d="M482 751 L489 745.6 L493 748.6 L499 744.4 L505 749 L509.8 748 V752 H482 Z" fill="#b9a777" opacity=".8"/>
<rect x="483.6" y="741.8" width="10.6" height="2.2" rx="1.1" fill="#f1f1f4"/>
<path d="M467 757 Q467.4 751.6 473 750.6 Q480 749.6 486 752 Q494 753.6 500 750 Q506 746.6 510 747.6 V753 Q508 757.4 500 757.2 Z" fill="#49b544"/>
<circle cx="477" cy="755" r="2.4" fill="#d6d636"/><circle cx="481" cy="752.8" r="2.6" fill="#cfd234"/><circle cx="486.6" cy="754.8" r="2.3" fill="#c9d03a"/><circle cx="484" cy="755.6" r="1.8" fill="#7fc644"/>
<path d="M466.6 754.6 L469.6 741" stroke="#cf8464" stroke-width="1.5"/>
<path d="M462.8 744.6 Q462.4 740.6 465 738.6 Q468.6 741 468 744.6 Q465.4 746.6 462.8 744.6 Z" fill="#55c41c"/>
<ellipse cx="472.6" cy="739.2" rx="4.4" ry="2.1" fill="#46b31a"/>
<path d="M470 746 Q473 743.8 477 745 Q476.6 749 473.2 750 Q470.2 749 470 746 Z" fill="#55c41c"/>
<path d="M510.6 749.8 Q511 744 508.6 741 L503.6 738 L498 734.6 M506 739.4 L503 735 M508.6 741 L509.6 737" stroke="#e2a263" stroke-width="1.5"/>
<circle cx="493.4" cy="738.6" r="2.3" fill="#6dbd48"/><circle cx="496.6" cy="743.6" r="2.1" fill="#6dbd48"/><circle cx="501.4" cy="736.4" r="1.9" fill="#79c552"/><circle cx="504.8" cy="734.4" r="1.8" fill="#79c552"/><circle cx="507.4" cy="736.6" r="1.6" fill="#6dbd48"/><circle cx="503" cy="741" r="1.6" fill="#6dbd48"/>
<!-- task view -->
<rect x="527" y="739" width="18" height="15.6" rx="1.8" fill="#5c5c5c"/>
<rect x="533" y="733" width="18.4" height="15.8" rx="1.8" fill="#f2f2f2"/>
<path d="M533 739 H545 V748.8 H534.8 Q533 748.8 533 747 Z" fill="#b9b9b9"/>
<!-- chat -->
<path d="M582.6 732.3 A11.5 11.5 0 1 1 576.4 753.5 L571 755.2 L572.8 749.8 A11.5 11.5 0 0 1 582.6 732.3 Z" fill="url(#gchat)"/>
<rect x="576" y="739.2" width="9.9" height="9.2" rx="1.7" fill="#fff"/><path d="M586.2 743 L589.4 740.6 V747 L586.2 744.6 Z" fill="#fff"/>
<!-- explorer -->
<path d="M614.9 734.6 Q614.9 733 616.5 733 H622.6 Q623.6 733 624.4 733.8 L626.6 736 H614.9 Z" fill="#e8a317"/>
<path d="M614.9 735.8 H637.6 Q639.2 735.8 639.2 737.4 V753 Q639.2 754.6 637.6 754.6 H616.5 Q614.9 754.6 614.9 753 Z" fill="#fbc740"/>
<path d="M614.9 735.8 H637.6 Q639.2 735.8 639.2 737.4 V742 H614.9 Z" fill="#ffd968" opacity=".8"/>
<path d="M619.5 754.6 V749.6 Q619.5 747.7 621.4 747.7 H632.1 Q634 747.7 634 749.6 V754.6 Z" fill="#1a86d8"/>
<rect x="622.8" y="750.4" width="8" height="2.1" rx="1" fill="#0f5ea8"/>
<!-- mail -->
<path d="M659 740.6 L671 732.6 L683.1 740.6 V743 H659 Z" fill="#0f5fb0"/>
<path d="M662.6 739.8 H679.6 V749 H662.6 Z" fill="#f4f4f4"/>
<path d="M659 740.6 L671.2 748 L683.1 740.6 V755 H659 Z" fill="#2eb2ef"/>
<path d="M659 740.6 L671.2 748 L659 755 Z" fill="#1b8fe3"/>
<path d="M659 755 L671.2 747.6 L683.1 755 Z" fill="#1479d0"/>
<!-- excel -->
<rect x="709.1" y="732.9" width="18.1" height="21.4" rx="1.4" fill="#185c37"/>
<path d="M709.1 734.3 Q709.1 732.9 710.5 732.9 H718.2 V740 H709.1 Z" fill="#21a366"/><path d="M718.2 732.9 H725.8 Q727.2 732.9 727.2 734.3 V740 H718.2 Z" fill="#33c481"/>
<rect x="709.1" y="740" width="9.1" height="7.2" fill="#107c41"/><rect x="718.2" y="740" width="9" height="7.2" fill="#21a366"/>
<rect x="702.9" y="738.2" width="12.4" height="11.8" rx="1.2" fill="#107c41"/>
<path d="M706.4 741 L711.8 747.4 M711.8 741 L706.4 747.4" stroke="#fff" stroke-width="1.6"/>
<!-- edge -->
<circle cx="759.1" cy="743.7" r="12.1" fill="url(#gedge)"/>
<path d="M747 745 Q747.6 754.4 757 755.8 Q764 756.2 768.6 751 Q762.6 753.6 757.6 750.6 Q753.6 747.8 754.6 743 Q751 740.6 747 745 Z" fill="#0d55a6"/>
<path d="M754.6 743 Q755.4 738.6 760 738.8 Q764 739.2 763.6 743 Q763.4 745 761.6 746 Q764 747.6 768 746.4 Q771.6 744.6 771.2 741 L762 734 L752 737 Z" fill="#2a201c"/>
<path d="M747.2 742 Q749 732.4 759 731.6 Q769.6 732 771.2 741.6 Q768 736.4 760.6 736.2 Q752 736.4 747.2 742 Z" fill="#3ec9c0"/>
<path d="M759 731.6 Q769.6 732 771.2 741.6 Q771.4 746 766.4 746.8 Q762.6 747 761.6 746 Q764.2 744.6 763.6 741.6 Q762.4 736.6 756 736.6 Q752.4 737 750.2 738.6 Q753.4 732.2 759 731.6 Z" fill="url(#gedge2)"/>
<!-- chrome -->
<circle cx="802.7" cy="744" r="12.2" fill="#e33b2e"/>
<path d="M802.7 744 L792.1 737.9 A12.2 12.2 0 0 0 802.7 756.2 L808.8 745.6 Z" fill="#2ba24c"/>
<path d="M802.7 744 L802.7 756.2 A12.2 12.2 0 0 0 913.3 737.9 Z" fill="none"/>
<path d="M802.7 756.2 A12.2 12.2 0 0 0 813.3 737.9 L801.1 737.9 L808.8 746.6 Z" fill="#fcc934"/>
<circle cx="802.7" cy="744" r="5.6" fill="#fff"/><circle cx="802.7" cy="744" r="4.4" fill="#3f7ee8"/>
<circle cx="812.3" cy="734.8" r="7.7" fill="#b9b9be"/>
<path d="M808.6 731 Q812.3 736 816 731 Q817.6 735 815 739.6 Q812.3 741.6 809.6 739.6 Q807 735 808.6 731 Z" fill="#4c4c54"/><circle cx="812.3" cy="732" r="2.2" fill="#ececf0"/><circle cx="810.2" cy="736.4" r="1" fill="#e8e8ee"/><circle cx="814.4" cy="736.4" r="1" fill="#e8e8ee"/>
<!-- acrobat -->
<rect x="834.9" y="731.9" width="24.1" height="23.9" fill="#ee4a1e"/>
<path d="M848.6 734.4 L854.6 733.6 L853.4 747.6 L848.4 750.6 Q850.6 744.4 847.6 740 Z" fill="#fff"/>
<path d="M839.6 742.4 Q841 737.6 846.4 736.6 Q848.6 741 846.6 745.6 L847.6 752 L839.6 753.4 Z" fill="#fff"/>
<!-- word -->
<rect x="885.1" y="732.8" width="18.1" height="21.5" rx="1.4" fill="#103f91"/>
<path d="M885.1 734.2 Q885.1 732.8 886.5 732.8 H901.8 Q903.2 732.8 903.2 734.2 V738.2 H885.1 Z" fill="#41a5ee"/><rect x="885.1" y="738.2" width="18.1" height="5.4" fill="#2b7cd3"/><rect x="885.1" y="743.6" width="18.1" height="5.4" fill="#185abd"/>
<rect x="879" y="737.8" width="12.4" height="12.2" rx="1.2" fill="#185abd"/>
<path d="M881.2 741 L883 747.2 L885.2 741.6 L887.4 747.2 L889.2 741" stroke="#fff" stroke-width="1.3"/>
<!-- firefox -->
<path d="M924.2 744.8 Q923.6 739.6 926.6 736 L927.8 738.4 L929.6 736.2 L931.2 738 Q933 737 934.6 737.2 Q935.4 733.4 938.3 731.9 Q939.4 735.2 942.8 737.6 Q946.4 741.2 946.2 746 Q945.2 755.2 934.9 755.4 Q925 755 924.2 744.8 Z" fill="url(#gff)"/>
<circle cx="934.8" cy="744.2" r="4.8" fill="url(#gffp)"/>
<path d="M927.4 741.6 Q931 738.6 935.4 739 Q938.4 739.4 939.4 741 Q936.6 740.6 935.6 742 Q933.4 741 931.4 742.6 Q929.4 743.4 927.4 741.6 Z" fill="#ff9a1e"/>
<path d="M937.6 740 Q942 743.6 940 749.4 Q943.6 746.6 942.6 741.6 Q941 738.8 937.6 740 Z" fill="#ffc02e" opacity=".9"/>
<!-- webex -->
<rect x="967.2" y="731.9" width="23.8" height="24" rx="5" fill="#0d0d0d"/>
<ellipse cx="974.8" cy="744" rx="3.3" ry="6" stroke="url(#gwx1)" stroke-width="3.5" transform="rotate(-10 974.8 744)"/>
<ellipse cx="983.3" cy="744" rx="3.3" ry="6" stroke="url(#gwx2)" stroke-width="3.5" transform="rotate(-10 983.3 744)"/>
<!-- spotify -->
<circle cx="1023" cy="744" r="12.3" fill="#1ed760"/>
<path d="M1016 739.6 Q1023.6 737.4 1030.6 741" stroke="#111" stroke-width="2.4" stroke-linecap="round"/><path d="M1016.8 744 Q1023.2 742.2 1029.2 745.2" stroke="#111" stroke-width="2" stroke-linecap="round"/><path d="M1017.6 748 Q1023 746.6 1027.8 749" stroke="#111" stroke-width="1.7" stroke-linecap="round"/>
<!-- drop -->
<path d="M1067.4 731.9 Q1076.6 741.6 1076.3 747.4 Q1075.8 755.9 1067 755.9 Q1058 755.9 1057.7 747.4 Q1057.7 741.6 1067.4 731.9 Z" fill="#2a9df4"/>
<path d="M1067.4 731.9 Q1072 736.6 1074.4 741 Q1069 741.6 1063.4 737 Q1065 734.4 1067.4 731.9 Z" fill="#f9b52e"/>
<path d="M1063.4 737 Q1069 741.6 1074.4 741 Q1076 744 1076.2 746.4 Q1067 748 1059.6 742.4 Q1061 739.8 1063.4 737 Z" fill="#ef5a8a"/>
<path d="M1059.6 742.4 Q1067 748 1076.2 746.4 Q1076.4 749.6 1075 752 Q1066 753 1057.8 746.6 Q1058.2 744.6 1059.6 742.4 Z" fill="#8a5fd6"/>
<!-- indicators -->
<g fill="#9a9692"><rect x="624" y="760.2" width="6" height="3" rx="1.5"/><rect x="712.1" y="760.2" width="6" height="3" rx="1.5"/><rect x="800" y="760.2" width="6" height="3" rx="1.5"/><rect x="976.1" y="760.2" width="6" height="3" rx="1.5"/><rect x="1019.8" y="760.2" width="6" height="3" rx="1.5"/><rect x="1063.9" y="760.2" width="6" height="3" rx="1.5"/></g>
<rect x="883.1" y="760" width="16" height="3" rx="1.5" fill="#4cc2ff"/>
<!-- tray -->
<path d="M1112.6 747 L1118.2 741.4 L1123.8 747" stroke="#fff" stroke-width="1.5"/>
<path d="M1143.4 741.6 A7 7 0 0 1 1156.6 740.4 M1156.8 736.6 V740.8 H1152.6 M1156.4 746.4 A7 7 0 0 1 1143.2 747.6 M1143 751.4 V747.2 H1147.2" stroke="#fff" stroke-width="1.2"/>
<circle cx="1154.4" cy="748.4" r="4.4" fill="#fba00f" stroke="#2a201c" stroke-width="1"/>
<path d="M1218.5 736.5 H1229.5 M1218.5 736.5 V747.5 H1231 M1222 751.5 H1229 M1225.5 747.5 V751.5" stroke="#fff" stroke-width="1.2"/>
<rect x="1229.6" y="735.6" width="4.4" height="6.4" rx=".8" stroke="#fff" stroke-width="1.1" fill="#2a201c"/><path d="M1231.8 742 V749" stroke="#fff" stroke-width="1.1"/>
<path d="M1242.5 741.5 H1245.5 L1249.5 738 V750.5 L1245.5 747 H1242.5 Z" stroke="#fff" stroke-width="1.1"/>
<path d="M1252 741.4 Q1253.8 744.2 1252 747.2" stroke="#fff" stroke-width="1"/><path d="M1254.4 739.6 Q1257.2 744.2 1254.4 749" stroke="#9a9694" stroke-width="1"/><path d="M1256.8 738 Q1260.6 744.2 1256.8 750.6" stroke="#6a6664" stroke-width="1"/>
<path d="M1338.4 736.6 Q1343.4 736.6 1343.4 742 V746.6 L1344.8 749 H1332 L1333.4 746.6 V742 Q1333.4 736.6 1338.4 736.6 Z" fill="#98e4ff"/><path d="M1336.4 750.4 H1340.4 Q1340.4 752.4 1338.4 752.4 Q1336.4 752.4 1336.4 750.4 Z" fill="#98e4ff"/>
</svg>
</div>
<span class="t" style="left:639.0px;top:9.5px;font-size:13px;color:#262626;transform:scaleX(0.9010);white-space:pre;">MEMOS  -  Word</span>
<span class="t" style="left:1116.7px;top:9.7px;font-size:12.5px;color:#fff;transform:scaleX(0.9149);">Inic. ses.</span>
<span class="t" style="left:13.4px;top:40.7px;font-size:12.5px;color:#fff;transform:scaleX(0.9927);">Archivo</span>
<span class="t" style="left:80.8px;top:41.7px;font-size:12.5px;color:#2b579a;transform:scaleX(0.9929);">Inicio</span>
<span class="t" style="left:136.4px;top:41.7px;font-size:12.5px;color:#333;transform:scaleX(0.9366);">Insertar</span>
<span class="t" style="left:202.6px;top:41.7px;font-size:12.5px;color:#333;transform:scaleX(0.9538);">Dibujar</span>
<span class="t" style="left:267.4px;top:41.7px;font-size:12.5px;color:#333;transform:scaleX(0.9514);">Diseño</span>
<span class="t" style="left:330.2px;top:41.7px;font-size:12.5px;color:#333;transform:scaleX(0.9710);">Disposición</span>
<span class="t" style="left:418.7px;top:41.7px;font-size:12.5px;color:#333;transform:scaleX(0.9108);">Referencias</span>
<span class="t" style="left:505.6px;top:41.7px;font-size:12.5px;color:#333;transform:scaleX(0.9468);">Correspondencia</span>
<span class="t" style="left:622.7px;top:41.7px;font-size:12.5px;color:#333;transform:scaleX(0.8854);">Revisar</span>
<span class="t" style="left:687.6px;top:41.7px;font-size:12.5px;color:#333;transform:scaleX(0.8815);">Vista</span>
<span class="t" style="left:739.6px;top:41.7px;font-size:12.5px;color:#333;transform:scaleX(0.9429);">Ayuda</span>
<span class="t" style="left:827.9px;top:41.7px;font-size:12.5px;color:#333;transform:scaleX(0.8853);">¿Qué desea hacer?</span>
<span class="t" style="left:13.7px;top:104.7px;font-size:12.5px;color:#262626;transform:scaleX(0.9187);">Pegar</span>
<span class="t" style="left:71.8px;top:70.7px;font-size:12.5px;color:#b1b1b1;transform:scaleX(0.9412);">Cortar</span>
<span class="t" style="left:71.8px;top:93.7px;font-size:12.5px;color:#b1b1b1;transform:scaleX(0.9486);">Copiar</span>
<span class="t" style="left:71.8px;top:116.7px;font-size:12.5px;color:#262626;transform:scaleX(0.9877);">Copiar formato</span>
<span class="t" style="left:41.7px;top:140.0px;font-size:11.8px;color:#3b3b3b;transform:scaleX(0.9647);">Portapapeles</span>
<span class="t" style="left:179.4px;top:78.7px;font-size:12.5px;color:#1a1a1a;transform:scaleX(0.9222);">Times New Roma</span>
<span class="t" style="left:292.1px;top:78.7px;font-size:12.5px;color:#222;transform:scaleX(0.9167);">12</span>
<span class="t" style="left:289.6px;top:140.0px;font-size:11.8px;color:#3b3b3b;transform:scaleX(0.9943);">Fuente</span>
<span class="t" style="left:560.9px;top:140.0px;font-size:11.8px;color:#3b3b3b;transform:scaleX(0.9554);">Párrafo</span>
<span class="t" style="left:884.6px;top:140.0px;font-size:11.8px;color:#3b3b3b;transform:scaleX(0.9667);">Estilos</span>
<span class="t" style="left:1147.8px;top:140.0px;font-size:11.8px;color:#3b3b3b;transform:scaleX(0.9905);">Edición</span>
<span class="t" style="left:1237.5px;top:140.0px;font-size:11.8px;color:#3b3b3b;transform:scaleX(0.9744);">Complementos</span>
<span class="t" style="left:1234.3px;top:104.6px;font-size:12.8px;color:#262626;transform:scaleX(0.9612);">Complementos</span>
<span class="t" style="left:1138.7px;top:70.7px;font-size:12.5px;color:#262626;transform:scaleX(0.9053);">Buscar</span>
<span class="t" style="left:1138.7px;top:93.7px;font-size:12.5px;color:#262626;transform:scaleX(0.9114);">Reemplazar</span>
<span class="t" style="left:1138.7px;top:116.7px;font-size:12.5px;color:#262626;transform:scaleX(0.9242);">Seleccionar</span>
<span class="t" style="left:733.5px;top:108.7px;font-size:12.5px;color:#5a5a5a;transform:scaleX(0.9620);">¶ Normal</span>
<span class="t" style="left:799.6px;top:108.7px;font-size:12.5px;color:#5a5a5a;transform:scaleX(0.8794);">¶ Sin espa...</span>
<span class="t" style="left:882.5px;top:108.7px;font-size:12.5px;color:#5a5a5a;transform:scaleX(0.9146);">Título 1</span>
<span class="t" style="left:955.0px;top:108.7px;font-size:12.5px;color:#5a5a5a;transform:scaleX(0.9207);">Título 2</span>
<span class="t" style="left:1031.9px;top:108.7px;font-size:12.5px;color:#5a5a5a;transform:scaleX(0.9355);">Título</span>
<span class="t" style="left:11.4px;top:701.0px;font-size:11.6px;color:#fff;transform:scaleX(0.9699);">Página 19 de 22</span>
<span class="t" style="left:111.3px;top:701.0px;font-size:11.6px;color:#fff;transform:scaleX(0.9722);">5630 palabras</span>
<span class="t" style="left:233.5px;top:701.0px;font-size:11.6px;color:#fff;transform:scaleX(0.9707);">Español (Ecuador)</span>
<span class="t" style="left:362.3px;top:701.0px;font-size:11.6px;color:#fff;transform:scaleX(1.0057);">Accesibilidad: todo correcto</span>
<span class="t" style="left:1331.3px;top:701.0px;font-size:11.6px;color:#fff;transform:scaleX(0.9250);">100%</span>
<span class="t" style="left:49.6px;top:728.0px;font-size:11.8px;color:#fff;transform:scaleX(0.9880);">28°C</span>
<span class="t" style="left:48.8px;top:744.0px;font-size:11.8px;color:#d2d0cf;transform:scaleX(1.0721);">Nublado</span>
<span class="t" style="left:331.5px;top:736.3px;font-size:13.6px;color:#d9d3ce;transform:scaleX(0.9950);">Búsqueda</span>
<span class="t" style="left:1177.8px;top:729.1px;font-size:11.4px;color:#fff;transform:scaleX(0.8667);">ESP</span>
<span class="t" style="left:1176.9px;top:745.1px;font-size:11.4px;color:#fff;transform:scaleX(1.0350);">LAA</span>
<span class="t" style="left:1293.8px;top:728.0px;font-size:11.6px;color:#fff;transform:scaleX(1.0296);">12:57</span>
<span class="t" style="left:1274.0px;top:744.0px;font-size:11.6px;color:#fff;transform:scaleX(1.0844);">4/3/2024</span>
</body>
</html>
